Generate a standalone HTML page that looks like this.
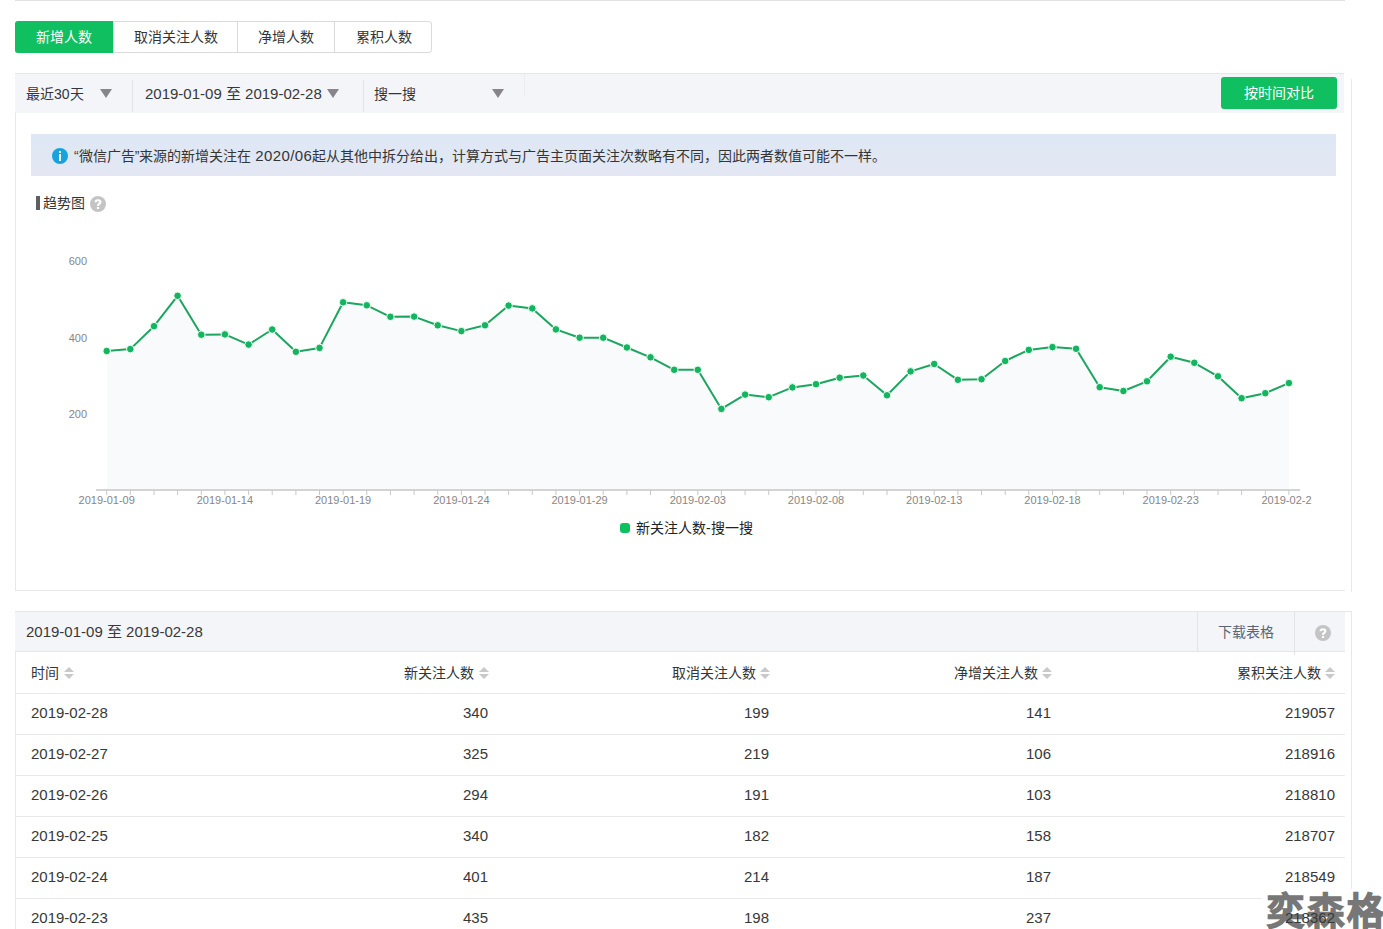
<!DOCTYPE html>
<html lang="zh-CN"><head><meta charset="utf-8">
<style>
*{box-sizing:border-box;margin:0;padding:0}
html,body{width:1383px;height:929px;overflow:hidden;background:#fff}
body{position:relative;font-family:"Liberation Sans",sans-serif;font-size:14px;color:#353535}
.a{position:absolute;white-space:nowrap}
.topline{position:absolute;left:15px;top:0;width:1330px;height:1px;background:#e3e3e3}
.tabs{position:absolute;left:15px;top:21px;height:32px;width:417px;border:1px solid #d9dadc;border-radius:3px}
.tab{position:absolute;top:0;height:30px;line-height:30px;text-align:center;font-size:14px;color:#353535}
.tab.on{background:#10bf5f;color:#fff}
.tab.sep{border-left:1px solid #d9dadc}
.card{position:absolute;left:15px;border-left:1px solid #ebebeb;border-right:1px solid #ebebeb}
.toolbar{position:absolute;left:15px;top:73px;width:1329px;height:40px;background:#f4f5f9;border-top:1px solid #e6e7ea}
.vsep{position:absolute;width:1px;background:#e3e4e8}
.tri{position:absolute;width:0;height:0;border-left:6px solid transparent;border-right:6px solid transparent;border-top:9px solid #86868a}
.btn{position:absolute;left:1221px;top:77px;width:116px;height:32px;background:#10bf5f;border-radius:3px;color:#fff;line-height:32px;text-align:center;font-size:14px}
.info{position:absolute;left:31px;top:134px;width:1305px;height:42px;background:linear-gradient(#dde8f4,#e3e7f3)}
.icon-i{position:absolute;left:52px;top:148px;width:16px;height:16px;border-radius:50%;background:#18a3df}
.icon-i:before{content:"";position:absolute;left:7px;top:3px;width:2px;height:2px;background:#f4ffff}
.icon-i:after{content:"";position:absolute;left:7px;top:6px;width:2px;height:7px;background:#f4ffff}
.qm{position:absolute;width:16px;height:16px}.qm svg{display:block}
.chart{position:absolute;left:0;top:0}
.legend-sq{position:absolute;left:620px;top:523px;width:10px;height:10px;border-radius:3px;background:#10bf5f}
.thead{position:absolute;left:15px;top:611px;width:1330px;height:41px;background:#f4f5f9;border-top:1px solid #e6e7ea;border-bottom:1px solid #e4e5e8}
.hrow{position:absolute;left:15px;width:1330px;height:1px;background:#e8e8e8}
.sort{position:absolute;width:9px;height:12px}
.sort:before{content:"";position:absolute;left:0;top:0;border-left:5px solid transparent;border-right:5px solid transparent;border-bottom:5px solid #c9c9c9}
.sort:after{content:"";position:absolute;left:0;top:7px;border-left:5px solid transparent;border-right:5px solid transparent;border-top:5px solid #c9c9c9}
.num{font-size:15px;color:#383838}
.wm{position:absolute;left:1262px;top:889px;width:130px;height:50px;background:#fff;font-size:37px;font-weight:900;color:#777;-webkit-text-stroke:1.4px #777;line-height:48px;padding-left:5px;letter-spacing:3px}
</style></head><body>
<div class="topline"></div>
<div class="tabs">
  <div class="tab on" style="left:-1px;top:-1px;height:32px;line-height:32px;width:98px;border-radius:3px 0 0 3px">新增人数</div>
  <div class="tab sep" style="left:97px;width:124px">取消关注人数</div>
  <div class="tab sep" style="left:221px;width:97px">净增人数</div>
  <div class="tab sep" style="left:318px;width:98px">累积人数</div>
</div>

<!-- card 1 -->
<div class="a" style="left:15px;top:73px;width:1px;height:518px;background:#e8e8e8"></div><div class="a" style="left:1351px;top:79px;width:1px;height:513px;background:#e8e8e8"></div><div class="a" style="left:15px;top:590px;width:1330px;height:1px;background:#e8e8e8"></div>
<div class="toolbar"></div>
<div class="a" style="left:26px;top:85px;line-height:18px">最近30天</div>
<div class="tri" style="left:100px;top:89px"></div>
<div class="vsep" style="left:132px;top:80px;height:32px"></div>
<div class="a num" style="left:145px;top:85px;line-height:18px">2019-01-09 至 2019-02-28</div>
<div class="tri" style="left:327px;top:89px"></div>
<div class="vsep" style="left:363px;top:80px;height:32px"></div>
<div class="a" style="left:374px;top:85px;line-height:18px">搜一搜</div>
<div class="tri" style="left:492px;top:89px"></div>
<div class="vsep" style="left:524px;top:74px;height:22px;background:#ececf0"></div>
<div class="btn">按时间对比</div>

<div class="info"></div>
<div class="icon-i"></div>
<div class="a" style="left:74px;top:147px;line-height:18px;color:#353535">“微信广告”来源的新增关注在 <span style="font-size:15px;letter-spacing:0.4px">2020/06</span>起从其他中拆分给出，计算方式与广告主页面关注次数略有不同，因此两者数值可能不一样。</div>

<div class="a" style="left:36px;top:196px;width:4px;height:14px;background:#5d5f63"></div>
<div class="a" style="left:43px;top:194px;line-height:18px">趋势图</div>
<div class="qm" style="left:90px;top:196px"><svg width="16" height="16" viewBox="0 0 16 16"><circle cx="8" cy="8" r="8" fill="#c4c4c4"/><path d="M5.6,6.3C5.6,4.8 6.6,4.2 8,4.2C9.5,4.2 10.4,5 10.4,6.1C10.4,7.3 9.4,7.7 8.7,8.3C8.1,8.8 8,9.2 8,10" fill="none" stroke="#fff" stroke-width="2.1"/><rect x="6.9" y="11" width="2.2" height="2" fill="#fff"/></svg></div>

<svg class="chart" width="1383" height="560" viewBox="0 0 1383 560">

<path d="M106.7,490 L106.7,351.0 L130.3,349.1 L154.0,326.2 L177.6,295.8 L201.3,334.7 L224.9,334.4 L248.6,344.6 L272.2,329.5 L295.9,351.8 L319.5,347.9 L343.1,302.3 L366.8,305.3 L390.4,316.8 L414.1,316.6 L437.7,325.3 L461.4,331.1 L485.0,325.3 L508.6,305.6 L532.3,308.4 L555.9,329.4 L579.6,337.7 L603.2,337.7 L626.9,347.5 L650.5,357.3 L674.2,369.8 L697.8,369.8 L721.4,408.9 L745.1,394.6 L768.7,397.2 L792.4,387.4 L816.0,384.2 L839.7,377.7 L863.3,375.5 L887.0,395.3 L910.6,371.4 L934.2,364.0 L957.9,379.8 L981.5,379.2 L1005.2,361.0 L1028.8,349.9 L1052.5,347.1 L1076.1,348.8 L1099.7,387.2 L1123.4,391.0 L1147.0,381.3 L1170.7,356.7 L1194.3,362.8 L1218.0,376.3 L1241.6,398.2 L1265.3,393.2 L1288.9,383.1 L1288.9,490 Z" fill="#f9fafc"/>
<path d="M96,490H1300" stroke="#c6c6c6" stroke-width="1.7"/>
<path d="M106.7,490V495M130.3,490V495M154.0,490V495M177.6,490V495M201.3,490V495M224.9,490V495M248.6,490V495M272.2,490V495M295.9,490V495M319.5,490V495M343.1,490V495M366.8,490V495M390.4,490V495M414.1,490V495M437.7,490V495M461.4,490V495M485.0,490V495M508.6,490V495M532.3,490V495M555.9,490V495M579.6,490V495M603.2,490V495M626.9,490V495M650.5,490V495M674.2,490V495M697.8,490V495M721.4,490V495M745.1,490V495M768.7,490V495M792.4,490V495M816.0,490V495M839.7,490V495M863.3,490V495M887.0,490V495M910.6,490V495M934.2,490V495M957.9,490V495M981.5,490V495M1005.2,490V495M1028.8,490V495M1052.5,490V495M1076.1,490V495M1099.7,490V495M1123.4,490V495M1147.0,490V495M1170.7,490V495M1194.3,490V495M1218.0,490V495M1241.6,490V495M1265.3,490V495M1288.9,490V495" stroke="#c8c8c8" stroke-width="1"/>
<g font-family="Liberation Sans" font-size="11" fill="#868686">
<text x="87" y="265" text-anchor="end">600</text>
<text x="87" y="342" text-anchor="end">400</text>
<text x="87" y="418" text-anchor="end">200</text>
<text x="106.7" y="504" text-anchor="middle">2019-01-09</text><text x="224.9" y="504" text-anchor="middle">2019-01-14</text><text x="343.1" y="504" text-anchor="middle">2019-01-19</text><text x="461.4" y="504" text-anchor="middle">2019-01-24</text><text x="579.6" y="504" text-anchor="middle">2019-01-29</text><text x="697.8" y="504" text-anchor="middle">2019-02-03</text><text x="816.0" y="504" text-anchor="middle">2019-02-08</text><text x="934.2" y="504" text-anchor="middle">2019-02-13</text><text x="1052.5" y="504" text-anchor="middle">2019-02-18</text><text x="1170.7" y="504" text-anchor="middle">2019-02-23</text><text x="1261.4" y="504">2019-02-2</text>
</g>
<polyline points="106.7,351.0 130.3,349.1 154.0,326.2 177.6,295.8 201.3,334.7 224.9,334.4 248.6,344.6 272.2,329.5 295.9,351.8 319.5,347.9 343.1,302.3 366.8,305.3 390.4,316.8 414.1,316.6 437.7,325.3 461.4,331.1 485.0,325.3 508.6,305.6 532.3,308.4 555.9,329.4 579.6,337.7 603.2,337.7 626.9,347.5 650.5,357.3 674.2,369.8 697.8,369.8 721.4,408.9 745.1,394.6 768.7,397.2 792.4,387.4 816.0,384.2 839.7,377.7 863.3,375.5 887.0,395.3 910.6,371.4 934.2,364.0 957.9,379.8 981.5,379.2 1005.2,361.0 1028.8,349.9 1052.5,347.1 1076.1,348.8 1099.7,387.2 1123.4,391.0 1147.0,381.3 1170.7,356.7 1194.3,362.8 1218.0,376.3 1241.6,398.2 1265.3,393.2 1288.9,383.1" fill="none" stroke="#1ca55e" stroke-width="2" stroke-linejoin="round"/>
<g fill="#14b460" stroke="#f0fff5" stroke-width="1"><circle cx="106.7" cy="351.0" r="3.8"/><circle cx="130.3" cy="349.1" r="3.8"/><circle cx="154.0" cy="326.2" r="3.8"/><circle cx="177.6" cy="295.8" r="3.8"/><circle cx="201.3" cy="334.7" r="3.8"/><circle cx="224.9" cy="334.4" r="3.8"/><circle cx="248.6" cy="344.6" r="3.8"/><circle cx="272.2" cy="329.5" r="3.8"/><circle cx="295.9" cy="351.8" r="3.8"/><circle cx="319.5" cy="347.9" r="3.8"/><circle cx="343.1" cy="302.3" r="3.8"/><circle cx="366.8" cy="305.3" r="3.8"/><circle cx="390.4" cy="316.8" r="3.8"/><circle cx="414.1" cy="316.6" r="3.8"/><circle cx="437.7" cy="325.3" r="3.8"/><circle cx="461.4" cy="331.1" r="3.8"/><circle cx="485.0" cy="325.3" r="3.8"/><circle cx="508.6" cy="305.6" r="3.8"/><circle cx="532.3" cy="308.4" r="3.8"/><circle cx="555.9" cy="329.4" r="3.8"/><circle cx="579.6" cy="337.7" r="3.8"/><circle cx="603.2" cy="337.7" r="3.8"/><circle cx="626.9" cy="347.5" r="3.8"/><circle cx="650.5" cy="357.3" r="3.8"/><circle cx="674.2" cy="369.8" r="3.8"/><circle cx="697.8" cy="369.8" r="3.8"/><circle cx="721.4" cy="408.9" r="3.8"/><circle cx="745.1" cy="394.6" r="3.8"/><circle cx="768.7" cy="397.2" r="3.8"/><circle cx="792.4" cy="387.4" r="3.8"/><circle cx="816.0" cy="384.2" r="3.8"/><circle cx="839.7" cy="377.7" r="3.8"/><circle cx="863.3" cy="375.5" r="3.8"/><circle cx="887.0" cy="395.3" r="3.8"/><circle cx="910.6" cy="371.4" r="3.8"/><circle cx="934.2" cy="364.0" r="3.8"/><circle cx="957.9" cy="379.8" r="3.8"/><circle cx="981.5" cy="379.2" r="3.8"/><circle cx="1005.2" cy="361.0" r="3.8"/><circle cx="1028.8" cy="349.9" r="3.8"/><circle cx="1052.5" cy="347.1" r="3.8"/><circle cx="1076.1" cy="348.8" r="3.8"/><circle cx="1099.7" cy="387.2" r="3.8"/><circle cx="1123.4" cy="391.0" r="3.8"/><circle cx="1147.0" cy="381.3" r="3.8"/><circle cx="1170.7" cy="356.7" r="3.8"/><circle cx="1194.3" cy="362.8" r="3.8"/><circle cx="1218.0" cy="376.3" r="3.8"/><circle cx="1241.6" cy="398.2" r="3.8"/><circle cx="1265.3" cy="393.2" r="3.8"/><circle cx="1288.9" cy="383.1" r="3.8"/></g>
</svg>

<div class="legend-sq"></div>
<div class="a" style="left:636px;top:519px;line-height:18px;color:#222">新关注人数-搜一搜</div>

<!-- card 2 -->
<div class="a" style="left:15px;top:611px;width:1px;height:330px;background:#e8e8e8"></div><div class="a" style="left:1351px;top:611px;width:1px;height:330px;background:#e8e8e8"></div><div class="a" style="left:15px;top:611px;width:1337px;height:1px;background:#e6e7ea"></div>
<div class="thead"></div>
<div class="a num" style="left:26px;top:623px;line-height:18px">2019-01-09 至 2019-02-28</div>
<div class="vsep" style="left:1197px;top:612px;height:40px"></div>
<div class="a" style="left:1218px;top:623px;line-height:18px;color:#5b6474">下载表格</div>
<div class="vsep" style="left:1294px;top:612px;height:43px"></div>
<div class="qm" style="left:1315px;top:625px"><svg width="16" height="16" viewBox="0 0 16 16"><circle cx="8" cy="8" r="8" fill="#c4c4c4"/><path d="M5.6,6.3C5.6,4.8 6.6,4.2 8,4.2C9.5,4.2 10.4,5 10.4,6.1C10.4,7.3 9.4,7.7 8.7,8.3C8.1,8.8 8,9.2 8,10" fill="none" stroke="#fff" stroke-width="2.1"/><rect x="6.9" y="11" width="2.2" height="2" fill="#fff"/></svg></div>

<div class="hrow" style="top:693px"></div>
<div class="hrow" style="top:734px"></div>
<div class="hrow" style="top:775px"></div>
<div class="hrow" style="top:816px"></div>
<div class="hrow" style="top:857px"></div>
<div class="hrow" style="top:898px"></div>

<div class="a" style="left:31px;top:664px;line-height:18px">时间</div><div class="sort" style="left:64px;top:667px"></div>
<div class="a" style="right:909px;top:664px;line-height:18px">新关注人数</div><div class="sort" style="left:479px;top:667px"></div>
<div class="a" style="right:627px;top:664px;line-height:18px">取消关注人数</div><div class="sort" style="left:760px;top:667px"></div>
<div class="a" style="right:345px;top:664px;line-height:18px">净增关注人数</div><div class="sort" style="left:1042px;top:667px"></div>
<div class="a" style="right:62px;top:664px;line-height:18px">累积关注人数</div><div class="sort" style="left:1325px;top:667px"></div>

<div class="wm">奕森格</div>

<div class="a num" style="left:31px;top:704px;line-height:18px">2019-02-28</div><div class="a num" style="right:895px;top:704px;line-height:18px">340</div><div class="a num" style="right:614px;top:704px;line-height:18px">199</div><div class="a num" style="right:332px;top:704px;line-height:18px">141</div><div class="a num" style="right:48px;top:704px;line-height:18px">219057</div>
<div class="a num" style="left:31px;top:745px;line-height:18px">2019-02-27</div><div class="a num" style="right:895px;top:745px;line-height:18px">325</div><div class="a num" style="right:614px;top:745px;line-height:18px">219</div><div class="a num" style="right:332px;top:745px;line-height:18px">106</div><div class="a num" style="right:48px;top:745px;line-height:18px">218916</div>
<div class="a num" style="left:31px;top:786px;line-height:18px">2019-02-26</div><div class="a num" style="right:895px;top:786px;line-height:18px">294</div><div class="a num" style="right:614px;top:786px;line-height:18px">191</div><div class="a num" style="right:332px;top:786px;line-height:18px">103</div><div class="a num" style="right:48px;top:786px;line-height:18px">218810</div>
<div class="a num" style="left:31px;top:827px;line-height:18px">2019-02-25</div><div class="a num" style="right:895px;top:827px;line-height:18px">340</div><div class="a num" style="right:614px;top:827px;line-height:18px">182</div><div class="a num" style="right:332px;top:827px;line-height:18px">158</div><div class="a num" style="right:48px;top:827px;line-height:18px">218707</div>
<div class="a num" style="left:31px;top:868px;line-height:18px">2019-02-24</div><div class="a num" style="right:895px;top:868px;line-height:18px">401</div><div class="a num" style="right:614px;top:868px;line-height:18px">214</div><div class="a num" style="right:332px;top:868px;line-height:18px">187</div><div class="a num" style="right:48px;top:868px;line-height:18px">218549</div>
<div class="a num" style="left:31px;top:909px;line-height:18px">2019-02-23</div><div class="a num" style="right:895px;top:909px;line-height:18px">435</div><div class="a num" style="right:614px;top:909px;line-height:18px">198</div><div class="a num" style="right:332px;top:909px;line-height:18px">237</div><div class="a num" style="right:48px;top:909px;line-height:18px">218362</div>

</body></html>
